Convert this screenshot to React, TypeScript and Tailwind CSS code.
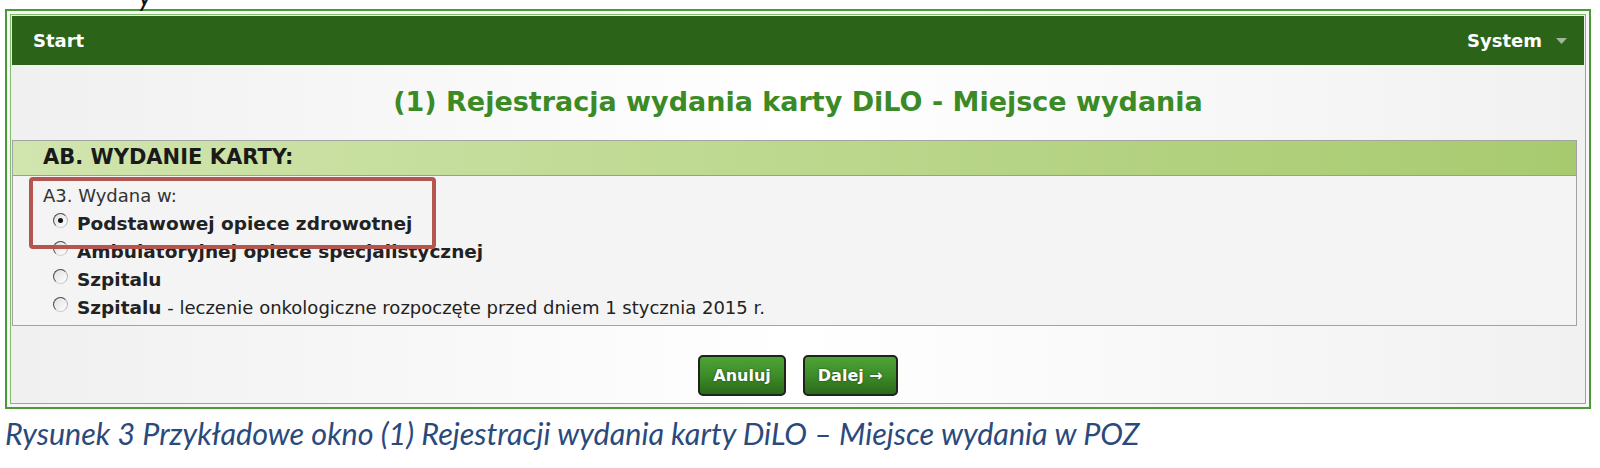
import type { ReactNode } from 'react'

const VERDANA = { fontFamily: '"DejaVu Sans", Verdana, sans-serif' }
const CAPTION = { fontFamily: 'Lato, "Open Sans", sans-serif' }

function Radio({ checked }: { checked?: boolean }) {
  return (
    <span className="mt-[3px] flex h-[15px] w-[15px] shrink-0 items-center justify-center rounded-full border border-t-[#4a4a4a] border-l-[#4a4a4a] border-r-[#b5b5b5] border-b-[#d0d0d0] bg-gradient-to-br from-[#e0e0e0] to-white">
      {checked && <span className="h-[5px] w-[5px] rounded-full bg-[#111]" />}
    </span>
  )
}

function Option({ checked, children }: { checked?: boolean; children: ReactNode }) {
  return (
    <div className="flex items-start gap-[9px] pl-[40px] leading-[28px]">
      <Radio checked={checked} />
      <div className="text-[18px] text-[#222]">{children}</div>
    </div>
  )
}

function GreenButton({ children }: { children: ReactNode }) {
  return (
    <button className="h-[41px] rounded-[5px] border-2 border-[#1d2419] bg-gradient-to-b from-[#4ea337] via-[#3d8c29] to-[#2b6a1b] px-[13px] text-[16px] font-bold text-white [text-shadow:0_0_2px_#1a3a10]">
      {children}
    </button>
  )
}

export default function App() {
  return (
    <div className="relative h-[468px] w-[1600px] overflow-hidden bg-white" style={VERDANA}>
      {/* clipped descender of the line above */}
      <span className="absolute left-[138px] top-[-28px] text-[30px] italic text-[#111]" style={CAPTION}>
        y
      </span>

      <div className="pl-[5px] pt-[9px]">
        <div className="w-[1586px] border-2 border-[#4a9a38] bg-[#f6f6f6] p-[3px]">
          <div className="border border-[#7fbc6c] bg-gradient-to-r from-[#f0f0f0] via-white to-[#f1f1f1] p-[1px]">
            {/* top bar */}
            <div className="flex h-[49px] items-center justify-between bg-[#2b6419] pl-[21px] pr-[17px] text-[18px] font-bold text-white">
              <span>Start</span>
              <span className="flex items-center gap-[14px]">
                System
                <svg width="11" height="6" viewBox="0 0 11 6">
                  <path d="M0 0 L11 0 L5.5 6 Z" fill="#9fb898" />
                </svg>
              </span>
            </div>

            {/* title */}
            <div className="flex h-[75px] items-center justify-center text-[27px] font-bold text-[#3b8a26]">
              (1) Rejestracja wydania karty DiLO - Miejsce wydania
            </div>

            {/* panel */}
            <div className="relative mr-[7px] border border-[#a3a3a3] bg-[#f4f4f4]">
              <div className="flex h-[35px] items-center border-b border-[#9c9c9c] bg-gradient-to-r from-[#d1e5ae] via-[#bcd88e] to-[#a8ca6f] pl-[30px] text-[21px] font-bold text-[#1a1a1a]">
                AB. WYDANIE KARTY:
              </div>
              <div className="pb-[3px] pt-[6px]">
                <div className="pl-[30px] text-[18px] leading-[28px] text-[#333]">A3. Wydana w:</div>
                <Option checked>
                  <b className="text-[18.5px]">Podstawowej opiece zdrowotnej</b>
                </Option>
                <Option>
                  <b className="text-[18.5px]">Ambulatoryjnej opiece specjalistycznej</b>
                </Option>
                <Option>
                  <b className="text-[18.5px]">Szpitalu</b>
                </Option>
                <Option>
                  <b className="text-[18.5px]">Szpitalu</b> - leczenie onkologiczne rozpoczęte przed dniem 1 stycznia 2015 r.
                </Option>
              </div>

              {/* annotation frame */}
              <div className="absolute left-[16px] top-[36px] h-[72px] w-[407px] rounded-[4px] border-4 border-[#b4554f]" />
            </div>

            {/* buttons */}
            <div className="flex justify-center gap-[17px] pb-[6px] pt-[29px]">
              <GreenButton>Anuluj</GreenButton>
              <GreenButton>Dalej →</GreenButton>
            </div>
          </div>
        </div>
      </div>

      <div className="pl-[5px] pt-[6px] text-[30.5px] italic leading-[36px] text-[#2a4a7c]" style={CAPTION}>
        Rysunek 3 Przykładowe okno (1) Rejestracji wydania karty DiLO – Miejsce wydania w POZ
      </div>
    </div>
  )
}
